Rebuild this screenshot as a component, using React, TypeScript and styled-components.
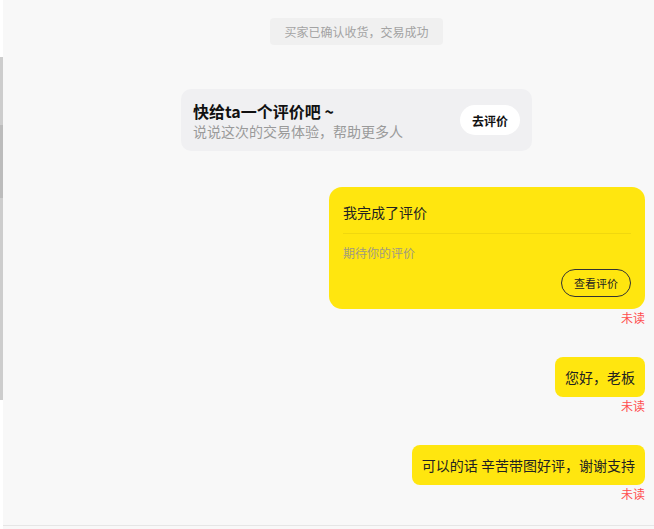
import React from "react";
import styled, { createGlobalStyle } from "styled-components";

const GlobalStyle = createGlobalStyle`
  html, body { margin: 0; padding: 0; background: #ffffff; }
  body { font-family: "Noto Sans CJK SC", "Noto Sans", "Liberation Sans", sans-serif; }
  * { box-sizing: border-box; }
`;

const Page = styled.div`
  display: flex;
  width: 654px;
  height: 529px;
  overflow: hidden;
`;

const Rail = styled.div`
  width: 3px;
  flex: none;
  padding-top: 57px;
  background: #ffffff;
`;

const RailTrack = styled.div`
  height: 343px;
  background: #cdcdcd;
  padding-top: 68px;
`;

const RailThumb = styled.div`
  height: 73px;
  background: #bcbcbc;
`;

const Chat = styled.div`
  flex: 1;
  display: flex;
  flex-direction: column;
  background: #f8f8f8;
`;

const MessageList = styled.div`
  height: 525px;
  flex: none;
  display: flex;
  flex-direction: column;
  padding-right: 9px;
  overflow: hidden;
`;

const Footer = styled.div`
  flex: 1;
  border-top: 1px solid #e6e6e6;
  background: #f8f8f8;
`;

const CenterRow = styled.div<{ $top: number }>`
  display: flex;
  justify-content: center;
  padding-left: 65px;
  margin-top: ${(p) => p.$top}px;
`;

const Notice = styled.div`
  background: #f0f0f0;
  color: #a3a3a3;
  font-size: 12px;
  line-height: 17px;
  padding: 5px 14px;
  border-radius: 4px;
`;

const PromptCard = styled.div`
  width: 351px;
  display: flex;
  align-items: center;
  justify-content: space-between;
  padding: 11px 12px;
  background: #f0f0f2;
  border-radius: 10px;
`;

const PromptText = styled.div`
  display: flex;
  flex-direction: column;
`;

const PromptTitle = styled.div`
  font-size: 16px;
  line-height: 22px;
  font-weight: 700;
  color: #111111;
`;

const PromptSub = styled.div`
  font-size: 14px;
  line-height: 18px;
  color: #9a9a9a;
`;

const WhiteButton = styled.div`
  width: 60px;
  height: 30px;
  border-radius: 15px;
  background: #ffffff;
  display: flex;
  align-items: center;
  justify-content: center;
  font-size: 12px;
  font-weight: 700;
  color: #111111;
`;

const RightRow = styled.div<{ $top: number }>`
  display: flex;
  flex-direction: column;
  align-items: flex-end;
  margin-top: ${(p) => p.$top}px;
`;

const Bubble = styled.div`
  background: #ffe60f;
  color: #222222;
  font-size: 14px;
  line-height: 20px;
  padding: 10px;
  border-radius: 8px;
  white-space: pre;
`;

const ReviewBubble = styled.div`
  width: 316px;
  background: #ffe60f;
  border-radius: 13px;
  padding: 14px 14px 12px;
  display: flex;
  flex-direction: column;
`;

const ReviewTitle = styled.div`
  font-size: 14px;
  line-height: 22px;
  color: #222222;
`;

const Divider = styled.div`
  height: 1px;
  margin-top: 10px;
  background: rgba(0, 0, 0, 0.06);
`;

const ReviewHint = styled.div`
  margin-top: 10px;
  font-size: 12px;
  line-height: 18px;
  color: #a09a80;
`;

const ReviewActions = styled.div`
  display: flex;
  justify-content: flex-end;
  margin-top: 7px;
`;

const OutlineButton = styled.div`
  width: 70px;
  height: 28px;
  border: 1px solid #333333;
  border-radius: 14px;
  display: flex;
  align-items: center;
  justify-content: center;
  font-size: 11px;
  color: #222222;
`;

const Unread = styled.div`
  font-size: 12px;
  line-height: 18px;
  color: #ff4d4f;
`;

export default function App() {
  return (
    <>
      <GlobalStyle />
      <Page>
        <Rail>
          <RailTrack>
            <RailThumb />
          </RailTrack>
        </Rail>
        <Chat>
          <MessageList>
            <CenterRow $top={18}>
              <Notice>买家已确认收货，交易成功</Notice>
            </CenterRow>
            <CenterRow $top={44}>
              <PromptCard>
                <PromptText>
                  <PromptTitle>快给ta一个评价吧 ~</PromptTitle>
                  <PromptSub>说说这次的交易体验，帮助更多人</PromptSub>
                </PromptText>
                <WhiteButton>去评价</WhiteButton>
              </PromptCard>
            </CenterRow>
            <RightRow $top={36}>
              <ReviewBubble>
                <ReviewTitle>我完成了评价</ReviewTitle>
                <Divider />
                <ReviewHint>期待你的评价</ReviewHint>
                <ReviewActions>
                  <OutlineButton>查看评价</OutlineButton>
                </ReviewActions>
              </ReviewBubble>
              <Unread>未读</Unread>
            </RightRow>
            <RightRow $top={30}>
              <Bubble>您好，老板</Bubble>
              <Unread>未读</Unread>
            </RightRow>
            <RightRow $top={30}>
              <Bubble>可以的话 辛苦带图好评，谢谢支持</Bubble>
              <Unread>未读</Unread>
            </RightRow>
          </MessageList>
          <Footer />
        </Chat>
      </Page>
    </>
  );
}
